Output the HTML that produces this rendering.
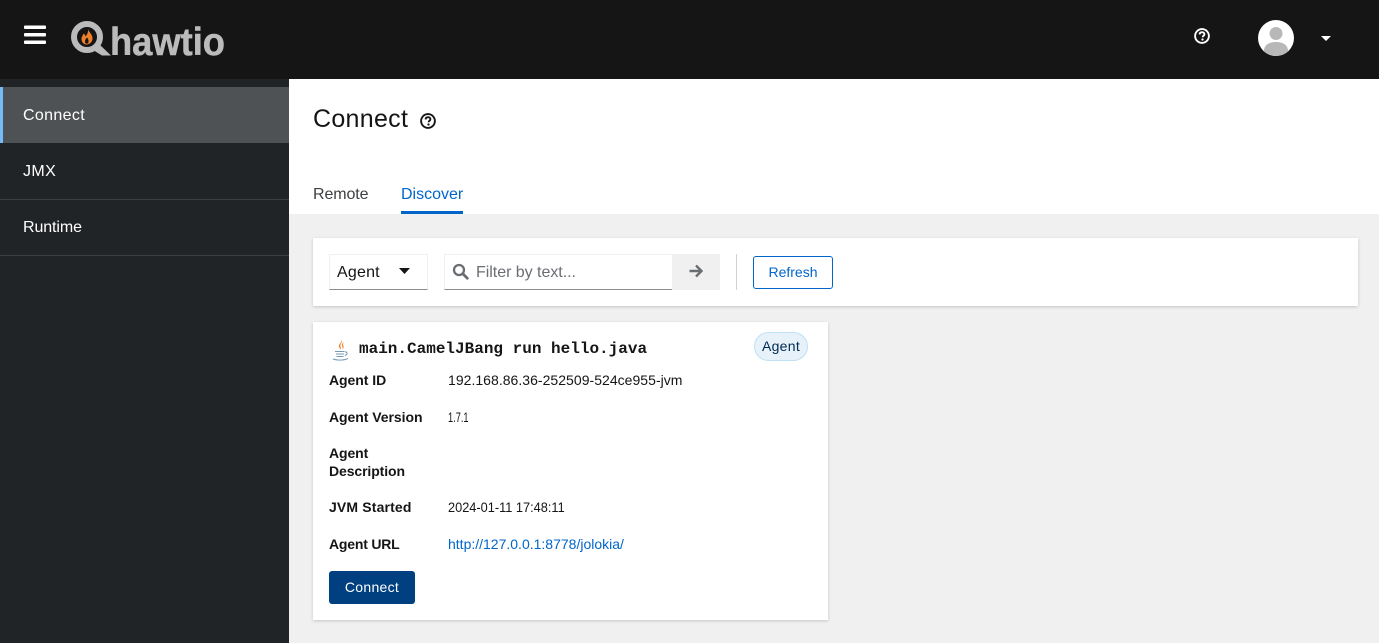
<!DOCTYPE html>
<html lang="en"><head><meta charset="utf-8"><title>Connect</title>
<style>
*{box-sizing:border-box}
html,body{margin:0;padding:0;width:1379px;height:643px;overflow:hidden;background:#f0f0f0;font-family:"Liberation Sans",sans-serif;color:#151515}
div,span,a{position:absolute;white-space:nowrap}
.nav{left:0;width:289px;height:56px;line-height:56px;padding-left:23px;font-size:16px;color:#fff;border-bottom:1px solid #3c3f42}
.k{left:329px;font-size:14px;font-weight:bold;line-height:18px;color:#151515}
.v{left:448px;font-size:14px;line-height:18px;color:#151515}
</style></head><body>
<div style="left:0;top:0;width:1379px;height:79px;background:#151515"></div>
<svg style="position:absolute;left:0;top:0" width="300" height="79" viewBox="0 0 300 79">
<rect x="24" y="25.500" width="22" height="3.500" rx="1" fill="#fff"/><rect x="24" y="33" width="22" height="3.500" rx="1" fill="#fff"/><rect x="24" y="40.500" width="22" height="3.500" rx="1" fill="#fff"/>
<circle cx="87" cy="37" r="13" fill="#151515" stroke="#bbb" stroke-width="6"/>
<path d="M93 50L102 55.500H111L99 44Z" fill="#bbb"/>
<path d="M88 29C89 32.500 92.500 34 92.500 38.500C92.500 42 89.500 44.500 86.500 44.500C83.500 44.500 81.500 42 81.500 39C81.500 36.500 83 35.500 83.500 33.500C85 34.500 85.500 35.500 85.500 36.500C87 34.500 88.500 32.500 88 29Z" fill="#ee7f2a"/>
<path d="M87 37.500C88.500 39.500 89 41 88 43.500L85.500 43.500C84.500 42 85 39.500 87 37.500Z" fill="#151515"/>
<text x="110" y="55" font-family="Liberation Sans" font-weight="bold" font-size="39" fill="#bbb" stroke="#bbb" stroke-width=".5" textLength="115" lengthAdjust="spacingAndGlyphs">hawtio</text>
</svg>
<svg style="position:absolute;left:1194px;top:28px" width="16" height="16" viewBox="0 0 16 16"><circle cx="8" cy="8" r="6.900" fill="none" stroke="#fff" stroke-width="1.900"/><path d="M5.600 6.400C5.700 4.900 6.800 4.200 8 4.200C9.400 4.200 10.400 5 10.400 6.200C10.400 7.700 8.600 7.700 8.600 9.300" fill="none" stroke="#fff" stroke-width="1.900"/><circle cx="8.500" cy="11.500" r="1.150" fill="#fff"/></svg>
<svg style="position:absolute;left:1258px;top:20px" width="36" height="36" viewBox="0 0 36 36"><clipPath id="c"><circle cx="18" cy="18" r="18"/></clipPath><circle cx="18" cy="18" r="18" fill="#fff"/><g clip-path="url(#c)"><circle cx="18" cy="13.500" r="6.500" fill="#b8b8b8"/><path d="M6 36V31C6 25 11 22 18 22C25 22 30 25 30 31V36Z" fill="#b8b8b8"/></g></svg>
<svg style="position:absolute;left:1320px;top:35px" width="12" height="7" viewBox="0 0 12 7"><path d="M1 1H11L6 6Z" fill="#fff"/></svg>

<div style="left:0;top:79px;width:289px;height:564px;background:#212427"></div>
<div class="nav" style="top:87px;background:#4f5255;border:0;border-left:3px solid #73bcf7;padding-left:20px;line-height:58px;letter-spacing:.35px">Connect</div>
<div class="nav" style="top:143px;height:57px;line-height:58px;letter-spacing:.4px">JMX</div>
<div class="nav" style="top:200px;letter-spacing:-.1px">Runtime</div>

<div style="left:289px;top:79px;width:1090px;height:135px;background:#fff"></div>
<div style="left:313px;top:104px;font-size:25px;line-height:30px;letter-spacing:.3px;color:#151515">Connect</div>
<svg style="position:absolute;left:420px;top:113px" width="16" height="16" viewBox="0 0 16 16"><circle cx="8" cy="8" r="6.900" fill="none" stroke="#151515" stroke-width="1.900"/><path d="M5.600 6.400C5.700 4.900 6.800 4.200 8 4.200C9.400 4.200 10.400 5 10.400 6.200C10.400 7.700 8.600 7.700 8.600 9.300" fill="none" stroke="#151515" stroke-width="1.900"/><circle cx="8.500" cy="11.500" r="1.150" fill="#151515"/></svg>
<div style="left:313px;top:185px;font-size:16px;line-height:20px;letter-spacing:-.1px;color:#3c3f42">Remote</div>
<div style="left:401px;top:185px;font-size:16px;line-height:20px;letter-spacing:0;color:#06c">Discover</div>
<div style="left:401px;top:211px;width:62px;height:3px;background:#06c"></div>

<div style="left:313px;top:238px;width:1045px;height:68px;background:#fff;box-shadow:0 1px 3px rgba(3,3,3,.18)"></div>
<div style="left:329px;top:254px;width:99px;height:36px;border:1px solid #f0f0f0;border-bottom:1px solid #8a8d90"></div>
<div style="left:337px;top:263px;font-size:16px;line-height:20px;letter-spacing:.2px;color:#151515">Agent</div>
<svg style="position:absolute;left:398px;top:267px" width="13" height="8" viewBox="0 0 13 8"><path d="M1 1H12L6.500 7Z" fill="#151515"/></svg>
<div style="left:444px;top:254px;width:228px;height:36px;border:1px solid #f0f0f0;border-right:0;border-bottom:1px solid #8a8d90"></div>
<svg style="position:absolute;left:452px;top:263px" width="17" height="17" viewBox="0 0 17 17"><circle cx="7" cy="7" r="5" fill="none" stroke="#6a6e73" stroke-width="2.300"/><path d="M10.800 10.800L15.300 15.300" stroke="#6a6e73" stroke-width="2.800" stroke-linecap="round"/></svg>
<div style="left:476px;top:263px;font-size:16px;line-height:20px;letter-spacing:-.03px;color:#6a6e73">Filter by text...</div>
<div style="left:672px;top:254px;width:48px;height:36px;background:#f0f0f0"></div>
<svg style="position:absolute;left:688px;top:263px" width="16" height="16" viewBox="0 0 16 16"><path d="M1.500 8H13M8 2.500L13.500 8L8 13.500" fill="none" stroke="#6a6e73" stroke-width="2.400"/></svg>
<div style="left:736px;top:254px;width:1px;height:36px;background:#d2d2d2"></div>
<div style="left:753px;top:256px;width:80px;height:33px;border:1px solid #06c;border-radius:3px;font-size:14px;line-height:31px;text-align:center;color:#06c">Refresh</div>

<div style="left:313px;top:322px;width:515px;height:298px;background:#fff;box-shadow:0 1px 3px rgba(3,3,3,.18)"></div>
<svg style="position:absolute;left:331px;top:338px;opacity:.8" width="20" height="24" viewBox="0 0 20 24">
<path d="M10 1C12 4 7 6 8 9C8.500 10.500 10 11 10 12C10.500 10 9 9 9.500 7C10 5 12 4 10 1Z" fill="#e76f00"/>
<path d="M13 4C10.500 5.500 10.500 7.500 11.500 9C12 10 11.500 11 11 11.500C13 10.500 13 9 12.300 7.800C11.800 6.500 12 5.300 13 4Z" fill="#e76f00"/>
<g fill="none" stroke="#5382a1" stroke-width="1"><path d="M4 13.500H13.500"/><path d="M5 16H13"/><path d="M5.500 18.500H12.500"/><path d="M14 14C16.500 13.500 17 16 14 17.500"/><path d="M2 21C6 22.500 13 22.500 17 20.500"/></g></svg>
<div style="left:359px;top:339px;font-family:'Liberation Mono',monospace;font-weight:bold;font-size:16px;line-height:20px;color:#151515">main.CamelJBang run hello.java</div>
<div style="left:754px;top:332px;width:54px;height:29px;border:1px solid #bee1f4;border-radius:15px;background:#e7f1fa;font-size:14px;line-height:27px;text-align:center;letter-spacing:.3px;color:#002952">Agent</div>

<div class="k" style="top:371px;letter-spacing:-.05px">Agent ID</div><div class="v" style="top:371px;letter-spacing:.03px">192.168.86.36-252509-524ce955-jvm</div>
<div class="k" style="top:408px;letter-spacing:-.05px">Agent Version</div><div class="v" style="top:408px;transform:scaleX(.66);transform-origin:left">1.7.1</div>
<div class="k" style="top:444px;letter-spacing:-.1px">Agent<br>Description</div>
<div class="k" style="top:498px;letter-spacing:.15px">JVM Started</div><div class="v" style="top:498px;transform:scaleX(.912);transform-origin:left">2024-01-11 17:48:11</div>
<div class="k" style="top:535px;letter-spacing:-.2px">Agent URL</div><a class="v" style="top:535px;color:#06c;text-decoration:none;letter-spacing:0" href="#">http://127.0.0.1:8778/jolokia/</a>
<div style="left:329px;top:571px;width:86px;height:33px;background:#004080;border-radius:3px;color:#fff;font-size:14px;line-height:33px;text-align:center;letter-spacing:.3px">Connect</div>
</body></html>
